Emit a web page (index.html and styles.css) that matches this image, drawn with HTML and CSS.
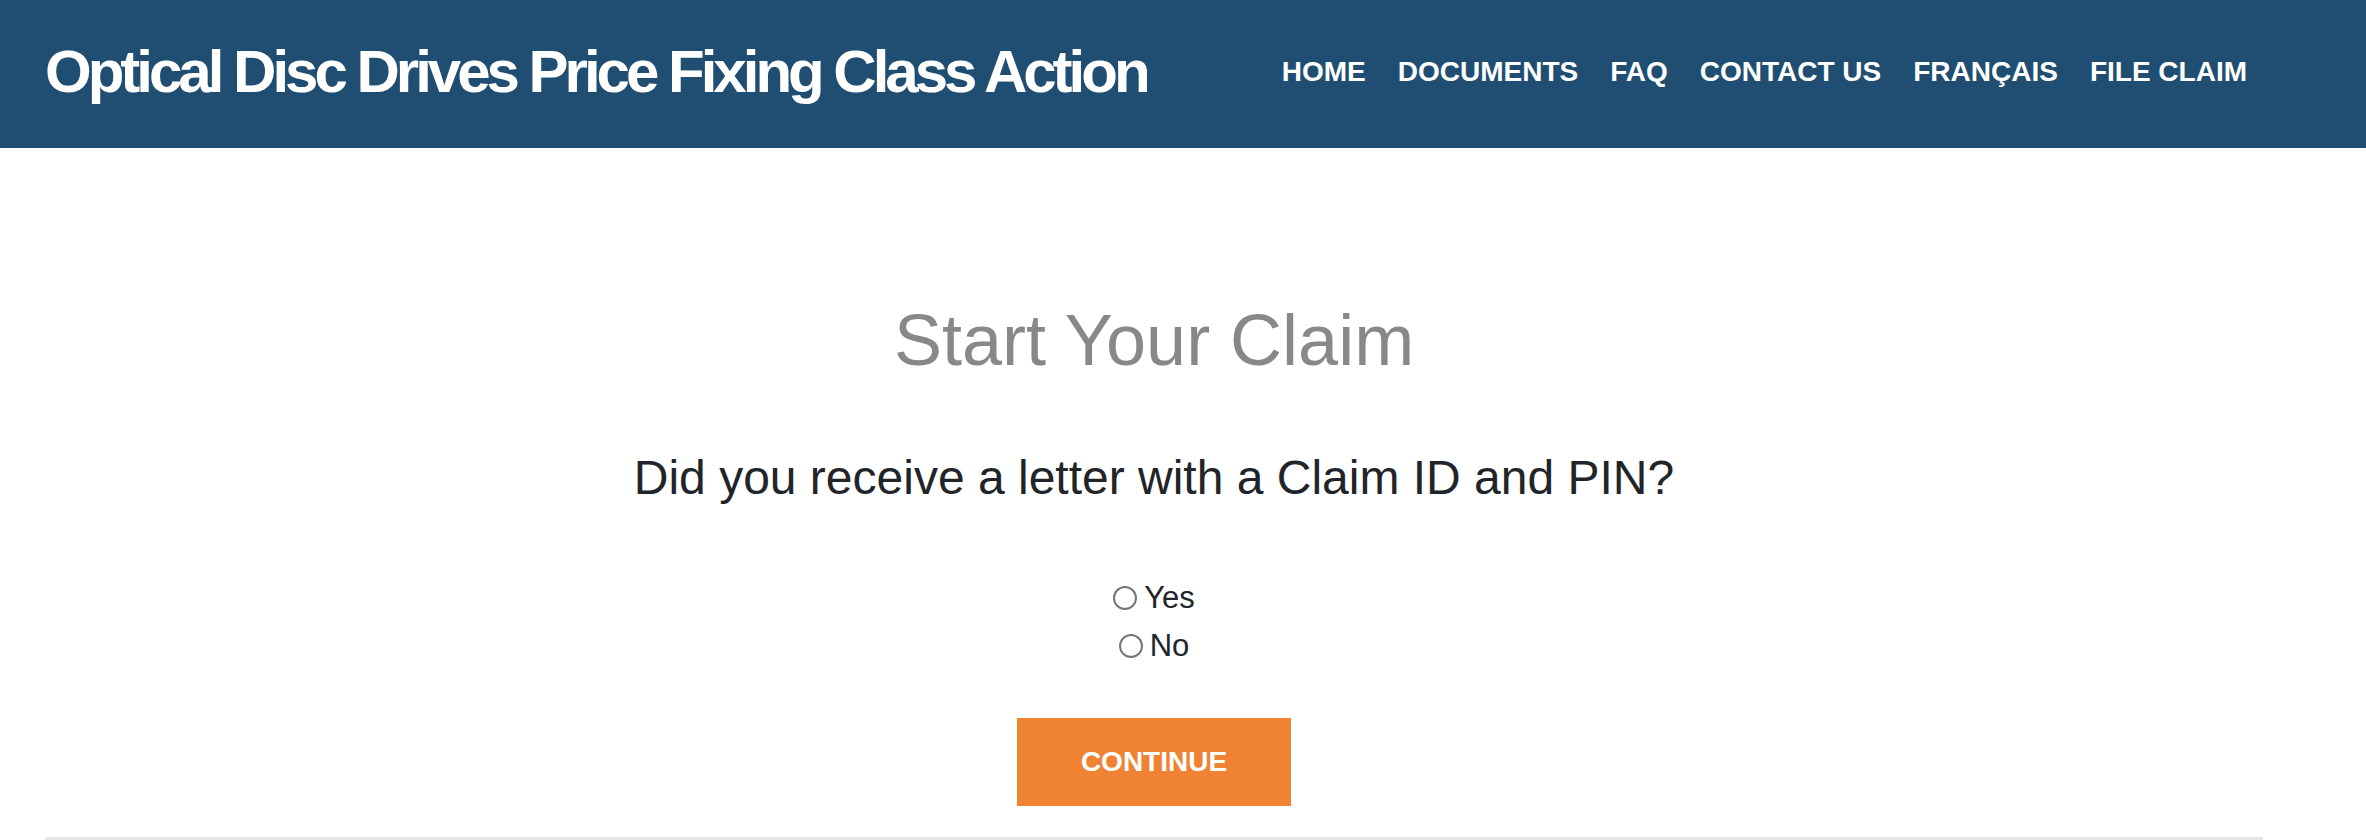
FILE: index.html
```html
<!DOCTYPE html>
<html lang="en">
<head>
<meta charset="utf-8">
<title>Optical Disc Drives Price Fixing Class Action</title>
<link rel="stylesheet" href="styles.css">
</head>
<body>
<header class="site-header">
  <div class="container header-inner">
    <a class="brand" href="#">Optical Disc Drives Price Fixing Class Action</a>
    <nav class="main-nav">
      <a href="#">HOME</a>
      <a href="#">DOCUMENTS</a>
      <a href="#">FAQ</a>
      <a href="#">CONTACT US</a>
      <a href="#">FRANÇAIS</a>
      <a href="#">FILE CLAIM</a>
    </nav>
  </div>
</header>
<main class="container content">
  <h1 class="page-title">Start Your Claim</h1>
  <p class="question">Did you receive a letter with a Claim ID and PIN?</p>
  <form class="claim-form">
    <div class="options">
      <label class="option"><input type="radio" name="letter" value="yes"><span>Yes</span></label>
      <label class="option"><input type="radio" name="letter" value="no"><span>No</span></label>
    </div>
    <button type="button" class="btn-continue">CONTINUE</button>
  </form>
  <hr class="divider">
</main>
</body>
</html>
```

FILE: styles.css
```css
* { box-sizing: border-box; }
html, body { margin: 0; padding: 0; }
body {
  font-family: "Liberation Sans", Arial, Helvetica, sans-serif;
  background: #ffffff;
  color: #212529;
}
.container {
  width: 2218px;
  margin-left: 45px;
}
.site-header {
  background: #1f4e72;
  height: 148px;
}
.header-inner {
  height: 100%;
  padding-bottom: 4px;
  display: flex;
  align-items: center;
  justify-content: space-between;
}
.brand {
  color: #ffffff;
  text-decoration: none;
  font-weight: 700;
  font-size: 60px;
  letter-spacing: -4px;
  line-height: 1;
  white-space: nowrap;
}
.main-nav {
  display: flex;
  align-items: center;
}
.main-nav a {
  color: #ffffff;
  text-decoration: none;
  font-weight: 700;
  font-size: 28px;
  letter-spacing: 0;
  padding: 0 16px;
  line-height: 1;
  white-space: nowrap;
}
.content {
  padding-top: 149px;
  text-align: center;
}
.page-title {
  margin: 0;
  font-weight: 400;
  font-size: 72px;
  line-height: 1.2;
  letter-spacing: 0;
  color: #888888;
}
.question {
  margin: 66px 0 0;
  font-size: 48px;
  line-height: 1.2;
  color: #212529;
}
.claim-form {
  margin-top: 67px;
  display: flex;
  flex-direction: column;
  align-items: center;
}
.options {
  display: flex;
  flex-direction: column;
  align-items: center;
}
.option {
  display: flex;
  align-items: center;
  gap: 7px;
  height: 48px;
  font-size: 31px;
  color: #212529;
}
.option input {
  appearance: none;
  -webkit-appearance: none;
  width: 24px;
  height: 24px;
  margin: 0;
  border: 2px solid #767676;
  border-radius: 50%;
  background: #fff;
}
.btn-continue {
  margin-top: 48px;
  width: 274px;
  height: 88px;
  border: 0;
  background: #ef8233;
  color: #ffffff;
  font-family: "Liberation Sans", Arial, Helvetica, sans-serif;
  font-weight: 700;
  font-size: 28px;
  padding: 0;
}
.divider {
  margin: 31px 0 0;
  border: 0;
  height: 3px;
  background: #e6e6e6;
}
```
